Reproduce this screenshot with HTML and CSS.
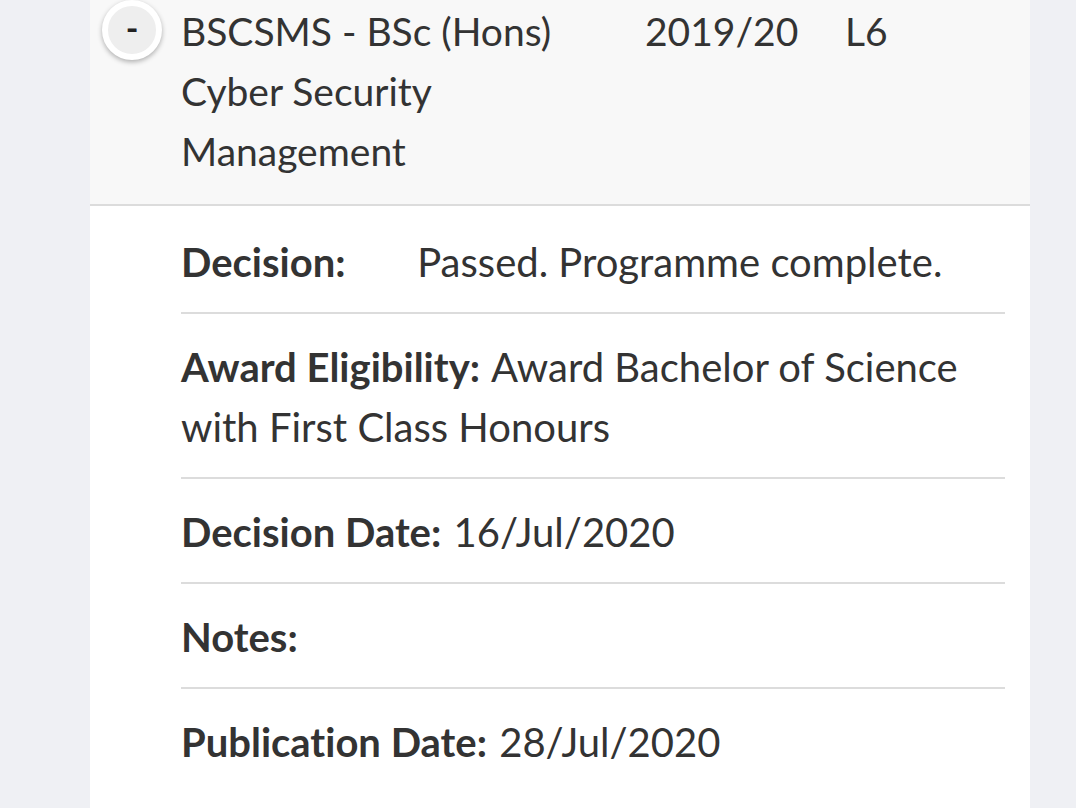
FILE: index.html
```html
<!DOCTYPE html>
<html>
<head>
<meta charset="utf-8">
<link rel="stylesheet" href="styles.css">
</head>
<body>
<div class="card">
  <div class="head">
    <div class="toggle-col"><span class="toggle">-</span></div>
    <div class="title">BSCSMS - BSc (Hons) Cyber Security Management</div>
    <div class="year">2019/20</div>
    <div class="level">L6</div>
  </div>
  <div class="details">
    <div class="row first"><span class="label fixed">Decision:</span> Passed. Programme complete.</div>
    <div class="row"><span class="label">Award Eligibility:</span> Award Bachelor of Science with First Class Honours</div>
    <div class="row"><span class="label">Decision Date:</span> 16/Jul/2020</div>
    <div class="row"><span class="label">Notes:</span></div>
    <div class="row last"><span class="label">Publication Date:</span> 28/Jul/2020</div>
  </div>
</div>
</body>
</html>
```
FILE: styles.css
```css
html, body {
  margin: 0;
  padding: 0;
  background: #eff0f4;
}
body {
  font-family: "Lato", "Open Sans", sans-serif;
  font-variant-ligatures: none;
  color: #333;
  font-size: 40px;
  line-height: 60px;
}
.card {
  margin-left: 90px;
  width: 940px;
  background: #fff;
  min-height: 808px;
}
.head {
  display: flex;
  background: #f8f8f8;
  border-bottom: 2px solid #dcdcdc;
  height: 206px;
  box-sizing: border-box;
}
.toggle-col {
  width: 91px;
  flex: none;
}
.toggle {
  display: block;
  margin: 0 0 0 12px;
  width: 48px;
  height: 48px;
  border-radius: 50%;
  background: #eeeeee;
  border: 6px solid #fff;
  box-shadow: 0 2px 5px rgba(0,0,0,0.3);
  color: #222;
  font-size: 34px;
  font-weight: 700;
  line-height: 44px;
  text-align: center;
}
.title {
  width: 464px;
  flex: none;
  margin-top: 1px;
  font-size: 39px;
}
.year {
  width: 200px;
  flex: none;
  margin-top: 1px;
  font-size: 39px;
}
.level {
  margin-top: 1px;
  font-size: 39px;
}
.details {
  padding: 0 25px 0 91px;
}
.row {
  padding: 23px 0 20px;
  border-bottom: 2px solid #dcdcdc;
}
.row.first {
  padding-top: 26px;
}
.row.last {
  border-bottom: none;
}
.label {
  font-weight: 700;
  margin-right: 2px;
}
.label.fixed {
  display: inline-block;
  width: 226px;
  margin-right: 0;
}
```
